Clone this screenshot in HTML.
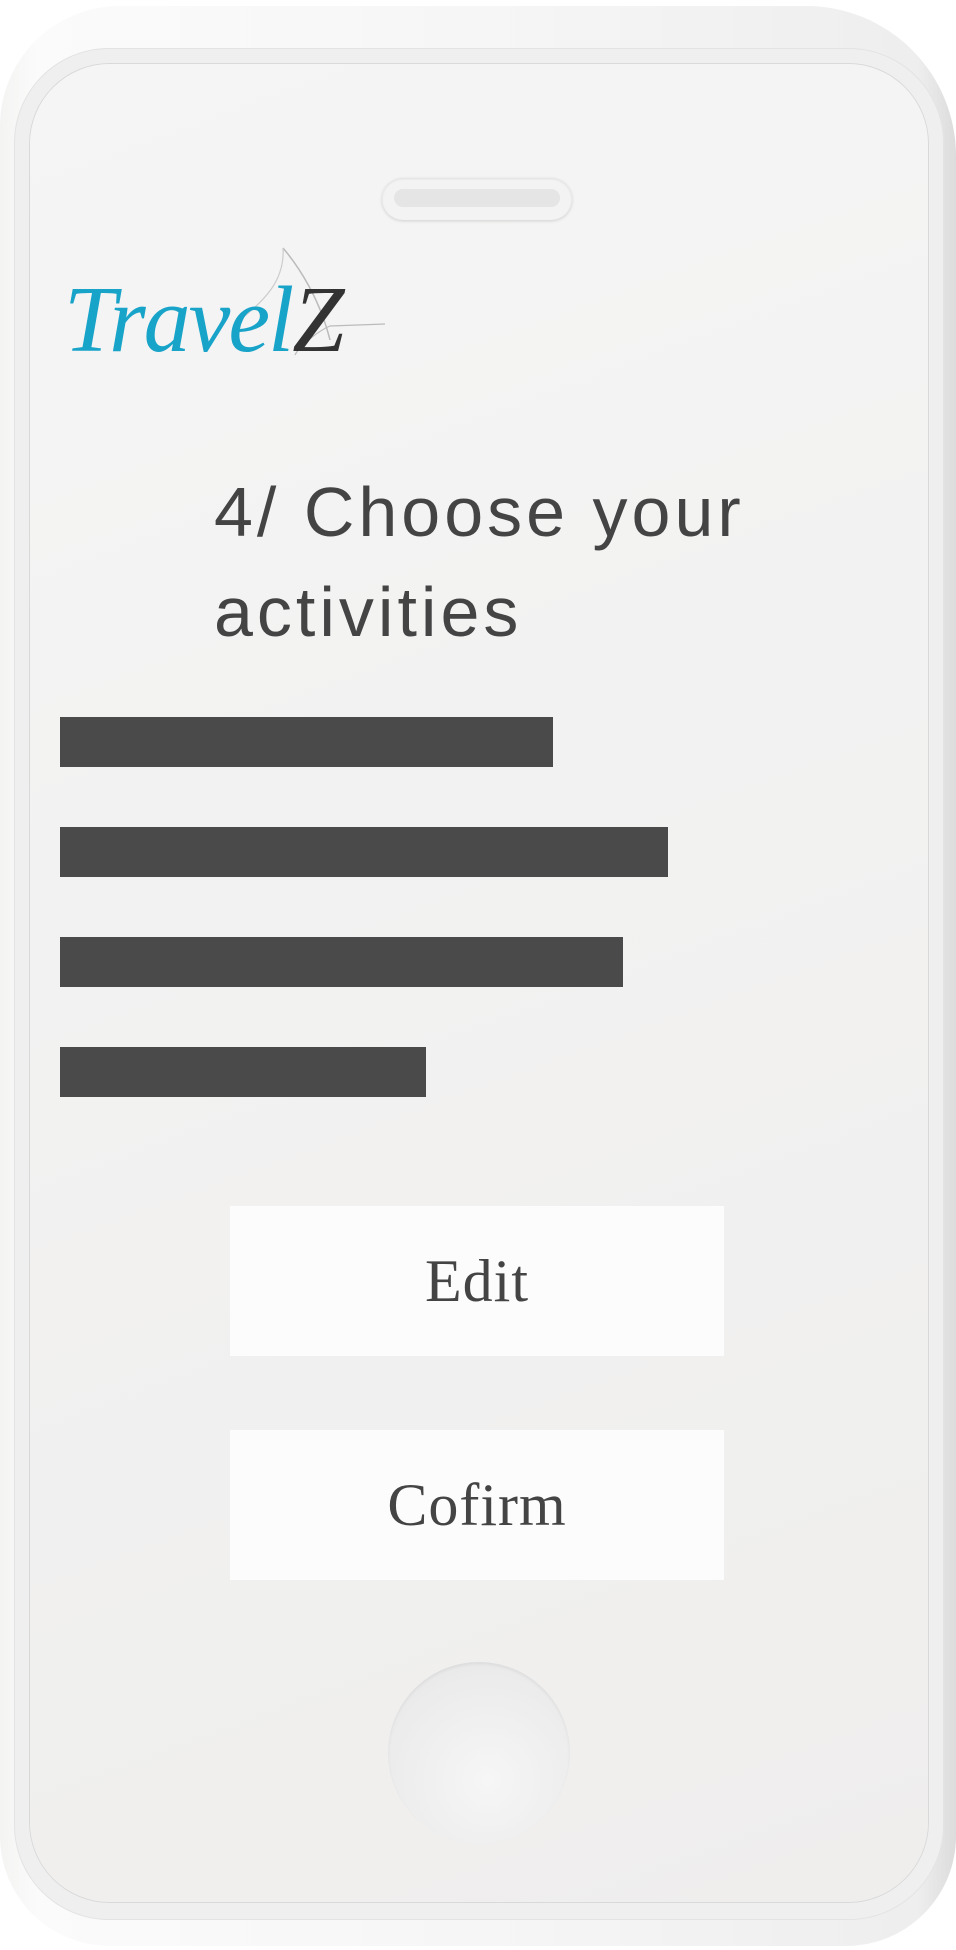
<!DOCTYPE html>
<html><head><meta charset="utf-8"><style>
html,body{margin:0;padding:0;width:956px;height:1950px;overflow:hidden;background:#fff;}
.body{position:absolute;left:0;top:6px;width:956px;height:1940px;border-radius:120px 150px 110px 110px;background:linear-gradient(90deg,#f4f4f3 0%,#fbfbfb 4%,#f6f6f6 50%,#eeeeee 96%,#dcdcdc 100%);}
.bezel{position:absolute;left:14px;top:48px;width:930px;height:1872px;border-radius:95px;background:#efefef;box-shadow:inset 0 0 0 1px #e3e3e3;}
.screen{position:absolute;left:30px;top:64px;width:898px;height:1838px;border-radius:80px;background:linear-gradient(160deg,#f5f5f5,#efeeed);box-shadow:0 0 0 1px #d9d9d9;}
.spk{position:absolute;left:382px;top:178px;width:190px;height:42px;border-radius:21px;background:#f3f3f3;box-shadow:0 1px 3px rgba(0,0,0,.15), inset 0 1px 2px rgba(0,0,0,.08);}
.spk i{position:absolute;left:12px;top:11px;width:166px;height:18px;border-radius:9px;background:#e5e5e5;}
.logo{position:absolute;left:64px;top:266px;font-family:"Liberation Serif",serif;font-style:italic;font-size:94px;color:#18a3c9;letter-spacing:-2px;}
.logo b{font-weight:normal;color:#333;}
h1{position:absolute;left:214px;top:462px;margin:0;font-family:"Liberation Sans",sans-serif;font-weight:normal;font-size:70px;line-height:100px;color:#444;letter-spacing:4px;}
.bar{position:absolute;left:60px;height:50px;background:#4a4a4a;}
.btn{position:absolute;left:230px;width:494px;height:150px;background:#fdfcfc;font-family:"Liberation Serif",serif;font-size:60px;color:#444;text-align:center;line-height:150px;letter-spacing:1px;}
.home{position:absolute;left:388px;top:1662px;width:182px;height:182px;border-radius:50%;background:radial-gradient(circle at 55% 65%,#f6f6f6,#ebebeb 70%,#e2e2e2);box-shadow:inset 0 2px 3px rgba(0,0,0,.06);}
</style></head><body>
<div class="body"></div>
<div class="bezel"></div>
<div class="screen"></div>
<div class="spk"><i></i></div>
<svg style="position:absolute;left:0;top:0" width="956" height="400"><path d="M283 248 C300 268 320 300 330 340" stroke="#bbb" fill="none" stroke-width="1.5"/><path d="M283 248 C285 280 265 300 240 320" stroke="#ccc" fill="none" stroke-width="1.2"/><path d="M385 324 L330 326 C320 330 300 345 295 355" stroke="#bbb" fill="none" stroke-width="1.2"/></svg>
<div class="logo">Travel<b>Z</b></div>
<h1>4/ Choose your<br>activities</h1>
<div class="bar" style="top:717px;width:493px"></div>
<div class="bar" style="top:827px;width:608px"></div>
<div class="bar" style="top:937px;width:563px"></div>
<div class="bar" style="top:1047px;width:366px"></div>
<div class="btn" style="top:1206px">Edit</div>
<div class="btn" style="top:1430px">Cofirm</div>
<div class="home"></div>
</body></html>
